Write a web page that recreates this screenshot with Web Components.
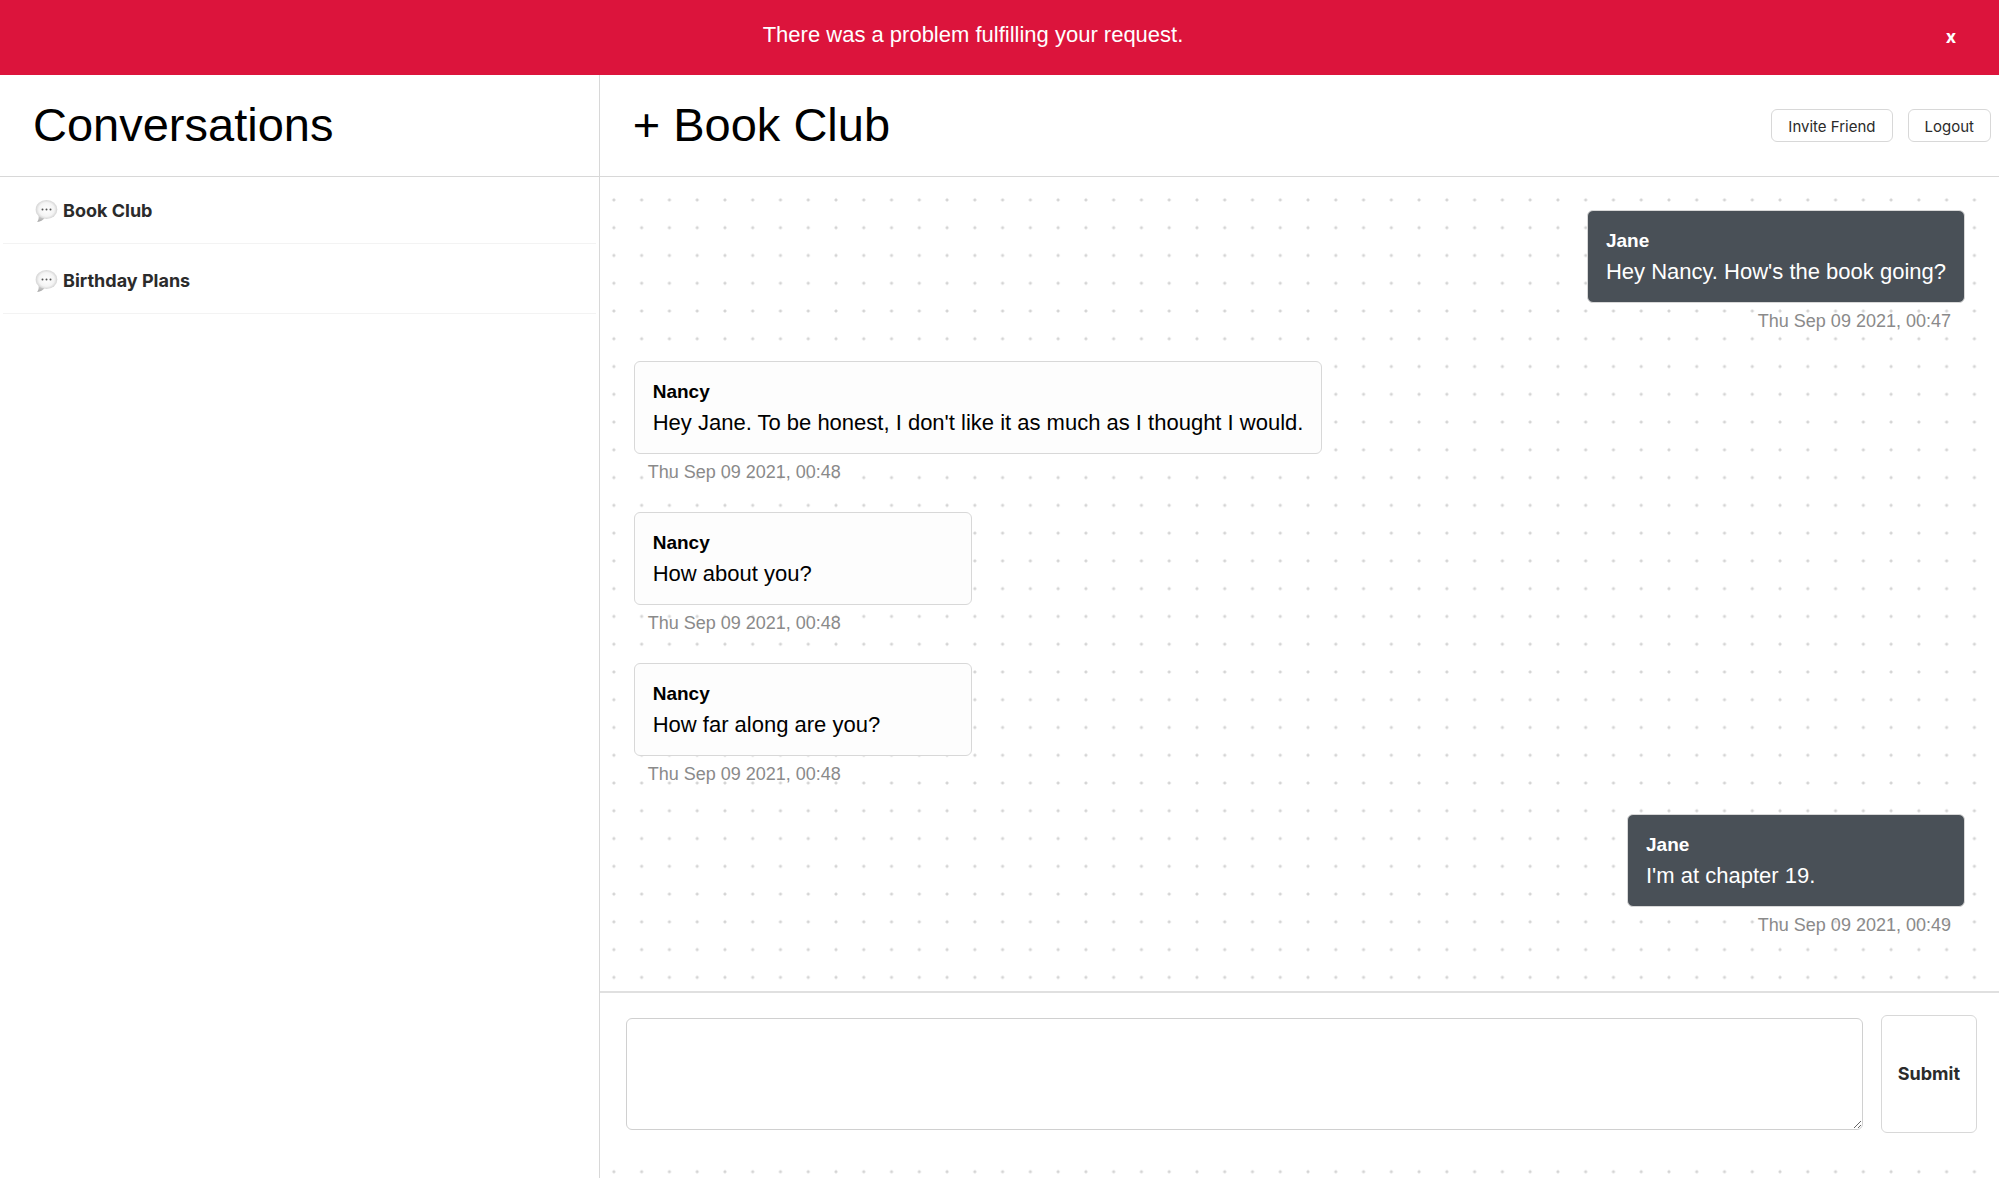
<!DOCTYPE html>
<html lang="en">
<head>
<meta charset="utf-8">
<meta name="viewport" content="width=device-width, initial-scale=1">
<title>Conversations</title>
<style>
    body {
        margin: 0;
        font-family: "Liberation Sans", Arial, sans-serif;
        color: #000000;
        background-color: #ffffff;
        --line: #d8d8d8;
        --ui-font: Inter, "Liberation Sans", sans-serif;
    }
</style>
</head>
<body>
<chat-app>
    <chat-alert slot="alert">There was a problem fulfilling your request.</chat-alert>
    <chat-sidebar slot="sidebar" heading="Conversations">
        <chat-link>Book Club</chat-link>
        <chat-link>Birthday Plans</chat-link>
    </chat-sidebar>
    <chat-header slot="header" heading="Book Club"></chat-header>
    <chat-message author="Jane" time="Thu Sep 09 2021, 00:47" mine>Hey Nancy. How's the book going?</chat-message>
    <chat-message author="Nancy" time="Thu Sep 09 2021, 00:48">Hey Jane. To be honest, I don't like it as much as I thought I would.</chat-message>
    <chat-message author="Nancy" time="Thu Sep 09 2021, 00:48">How about you?</chat-message>
    <chat-message author="Nancy" time="Thu Sep 09 2021, 00:48">How far along are you?</chat-message>
    <chat-message author="Jane" time="Thu Sep 09 2021, 00:49" mine>I'm at chapter 19.</chat-message>
    <chat-form slot="form"></chat-form>
</chat-app>

<script>
function createTemplate(html) {
  const template = document.createElement("template");
  template.innerHTML = html;
  return template;
}

class BaseElement extends HTMLElement {
  constructor() {
    super();
    this.attachShadow({ mode: "open" });
    this.shadowRoot.appendChild(this.constructor.template.content.cloneNode(true));
  }

  setText(selector, value) {
    this.shadowRoot.querySelector(selector).textContent = value;
  }
}

class ChatApp extends BaseElement {
  static template = createTemplate(`
<style>
    :host {
        display: flex;
        flex-direction: column;
        min-height: 100vh;
    }
    .columns {
        display: grid;
        grid-template-columns: 30% 1fr;
        flex: 1;
    }
    aside {
        border-right: 1px solid var(--line);
    }
    main {
        --dot: calc(250px / 9);
        background-image: radial-gradient(circle, #d4d4d4 1px, transparent 2px);
        background-size: var(--dot) var(--dot);
    }
    .messages {
        display: flex;
        flex-direction: column;
        gap: 28px;
        padding: 33px 34px 54px;
    }
</style>
<slot name="alert"></slot>
<div class="columns">
    <aside><slot name="sidebar"></slot></aside>
    <main>
        <slot name="header"></slot>
        <div class="messages"><slot></slot></div>
        <slot name="form"></slot>
    </main>
</div>
`);
}

class ChatAlert extends BaseElement {
  static template = createTemplate(`
<style>
    :host {
        display: flex;
        align-items: flex-start;
        box-sizing: border-box;
        height: 75px;
        padding: 20px 32px 0 0;
        background-color: crimson;
        color: #ffffff;
        font-size: 22px;
        line-height: 30px;
    }
    p {
        flex: 1;
        margin: 0;
        text-align: center;
    }
    button {
        width: 32px;
        margin-left: -11px;
        padding: 0;
        border: 0;
        background: none;
        color: inherit;
        font: 700 18px/34px var(--ui-font);
        cursor: pointer;
    }
</style>
<p role="alert"><slot></slot></p>
<button type="button" aria-label="Dismiss">x</button>
`);

  connectedCallback() {
    this.shadowRoot.querySelector("button").addEventListener("click", () => this.remove());
  }
}

class ChatSidebar extends BaseElement {
  static template = createTemplate(`
<style>
    :host {
        display: block;
    }
    header {
        box-sizing: border-box;
        height: 102px;
        padding: 20px 33px;
        border-bottom: 1px solid var(--line);
    }
    h1 {
        margin: 0;
        font-size: 47px;
        font-weight: 400;
        line-height: 60px;
    }
    nav {
        display: flex;
        flex-direction: column;
        gap: 3px;
        padding: 0 3px;
    }
</style>
<header><h1></h1></header>
<nav><slot></slot></nav>
`);

  connectedCallback() {
    this.setText("h1", this.getAttribute("heading"));
  }
}

class ChatLink extends BaseElement {
  static template = createTemplate(`
<style>
    :host {
        display: block;
    }
    a {
        display: flex;
        align-items: center;
        gap: 5px;
        box-sizing: border-box;
        height: 67px;
        padding: 2px 31px 0;
        border-bottom: 1px solid #f3f3f3;
        color: #2b2b2b;
        font: 700 18px/24px var(--ui-font);
        text-decoration: none;
    }
    svg {
        width: 24px;
        height: 26px;
    }
</style>
<a href="#">
    <svg viewBox="0 0 24 26" aria-hidden="true">
        <defs>
            <radialGradient id="bubble" cx="0.5" cy="0.5" r="0.55">
                <stop offset="0" stop-color="#ffffff"/>
                <stop offset="0.65" stop-color="#f4f4f4"/>
                <stop offset="1" stop-color="#c9c9c9"/>
            </radialGradient>
            <linearGradient id="tail" x1="0" y1="0" x2="0" y2="1">
                <stop offset="0" stop-color="#d6d6d6"/>
                <stop offset="1" stop-color="#a6a6a6"/>
            </linearGradient>
        </defs>
        <path d="M4.500 17C5 20 4.500 22 3.200 24C6.500 23.600 9 22.300 10.500 20Z" fill="url(#tail)"/>
        <ellipse cx="12.500" cy="11.500" rx="10.800" ry="9.600" fill="url(#bubble)"/>
        <g fill="#555555">
            <circle cx="8.500" cy="11.500" r="1"/>
            <circle cx="12.500" cy="11.500" r="1"/>
            <circle cx="16.500" cy="11.500" r="1"/>
        </g>
    </svg>
    <span><slot></slot></span>
</a>
`);
}

class ChatHeader extends BaseElement {
  static template = createTemplate(`
<style>
    :host {
        display: flex;
        align-items: center;
        justify-content: space-between;
        box-sizing: border-box;
        height: 102px;
        padding: 20px 8px 20px 33px;
        border-bottom: 1px solid var(--line);
        background-color: #ffffff;
    }
    h2 {
        align-self: flex-start;
        margin: 0;
        font-size: 47px;
        font-weight: 400;
        line-height: 60px;
    }
    .actions {
        display: flex;
        gap: 15px;
    }
    button {
        height: 33px;
        padding: 2px 16px 0;
        border: 1px solid var(--line);
        border-radius: 6px;
        background-color: #ffffff;
        color: #2b2b2b;
        font: 400 15px/20px var(--ui-font);
        cursor: pointer;
    }
</style>
<h2>+ <span></span></h2>
<div class="actions">
    <button type="button">Invite Friend</button>
    <button type="button">Logout</button>
</div>
`);

  connectedCallback() {
    this.setText("h2 span", this.getAttribute("heading"));
  }
}

class ChatMessage extends BaseElement {
  static template = createTemplate(`
<style>
    :host {
        display: flex;
        flex-direction: column;
        align-items: flex-start;
        gap: 6px;
    }
    .bubble {
        box-sizing: border-box;
        min-width: 338px;
        padding: 15px 18px;
        border: 1px solid var(--line);
        border-radius: 6px;
        background-color: #fdfdfd;
    }
    h3 {
        margin: 0;
        font-size: 19px;
        line-height: 30px;
    }
    p {
        margin: 0;
        font-size: 22px;
        line-height: 31px;
    }
    time {
        padding: 0 14px;
        color: #8a8a8a;
        font-size: 18px;
        line-height: 24px;
    }
    :host([mine]) {
        align-items: flex-end;
    }
    :host([mine]) .bubble {
        background-color: #495057;
        color: #ffffff;
    }
</style>
<div class="bubble">
    <h3></h3>
    <p><slot></slot></p>
</div>
<time></time>
`);

  connectedCallback() {
    this.setText("h3", this.getAttribute("author"));
    this.setText("time", this.getAttribute("time"));
  }
}

class ChatForm extends BaseElement {
  static template = createTemplate(`
<style>
    :host {
        display: block;
        border-top: 2px solid #e0e0e0;
        background-color: #ffffff;
    }
    form {
        display: flex;
        align-items: center;
        gap: 18px;
        padding: 22px 22px 26px 26px;
    }
    textarea {
        flex: 1;
        box-sizing: border-box;
        height: 112px;
        padding: 14px;
        border: 1px solid #d0d0d0;
        border-radius: 6px;
        font: inherit;
        font-size: 22px;
    }
    button {
        height: 118px;
        padding: 0 16px;
        border: 1px solid var(--line);
        border-radius: 6px;
        background-color: #ffffff;
        color: #2b2b2b;
        font: 700 18px/24px var(--ui-font);
        cursor: pointer;
    }
</style>
<form>
    <textarea aria-label="Message"></textarea>
    <button type="submit">Submit</button>
</form>
`);

  connectedCallback() {
    this.shadowRoot.querySelector("form").addEventListener("submit", (e) => e.preventDefault());
  }
}

customElements.define("chat-app", ChatApp);
customElements.define("chat-alert", ChatAlert);
customElements.define("chat-sidebar", ChatSidebar);
customElements.define("chat-link", ChatLink);
customElements.define("chat-header", ChatHeader);
customElements.define("chat-message", ChatMessage);
customElements.define("chat-form", ChatForm);
</script>
</body>
</html>
